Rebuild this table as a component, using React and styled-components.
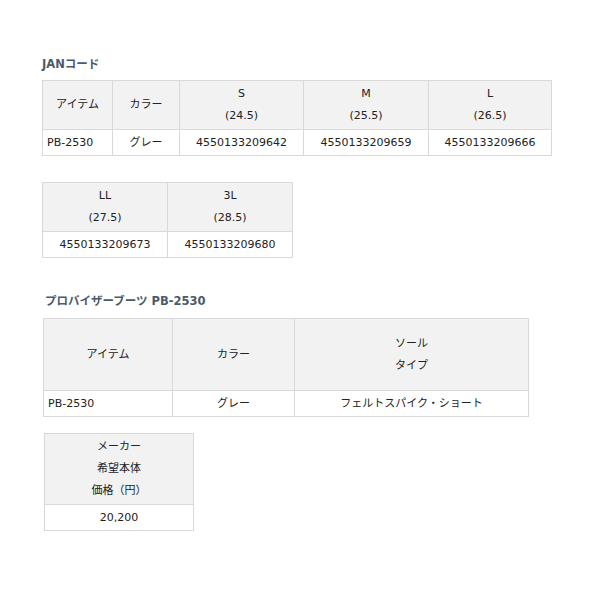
import styled, { createGlobalStyle } from "styled-components";

const GlobalStyle = createGlobalStyle`
  html, body {
    margin: 0;
    padding: 0;
    background: #ffffff;
  }
  body {
    font-family: "DejaVu Sans", "Noto Sans CJK JP", sans-serif;
    font-size: 11px;
    color: #222222;
  }
`;

const Page = styled.div`
  display: flex;
  flex-direction: column;
  align-items: flex-start;
  padding: 56px 0 40px 42px;
`;

const Heading = styled.h3`
  margin: ${(p) => p.$top || 0}px 0 0 ${(p) => p.$left || 0}px;
  font-size: 11.5px;
  line-height: 16px;
  font-weight: bold;
  color: #4b5a6c;
`;

const Table = styled.table`
  border-collapse: separate;
  border-spacing: 0;
  table-layout: fixed;
  margin: ${(p) => p.$top || 0}px 0 0 ${(p) => p.$left || 0}px;
  border-top: 1px solid #d9d9d9;
  border-left: 1px solid #d9d9d9;
  font-size: 11px;
`;

const Cell = styled.td`
  box-sizing: border-box;
  width: ${(p) => p.$w}px;
  height: ${(p) => p.$h || 26}px;
  padding: 0 4px;
  border-right: 1px solid #d9d9d9;
  border-bottom: 1px solid #d9d9d9;
  text-align: ${(p) => (p.$left ? "left" : "center")};
  vertical-align: middle;
  line-height: 22px;
  font-size: 11px;
  background: #ffffff;
`;

const HeadCell = styled(Cell)`
  background: #f2f2f2;
  font-weight: normal;
`;

const jan = [
  { size: "S", cm: "(24.5)", code: "4550133209642", w: 124 },
  { size: "M", cm: "(25.5)", code: "4550133209659", w: 125 },
  { size: "L", cm: "(26.5)", code: "4550133209666", w: 123 },
];

const jan2 = [
  { size: "LL", cm: "(27.5)", code: "4550133209673", w: 125 },
  { size: "3L", cm: "(28.5)", code: "4550133209680", w: 125 },
];

export default function App() {
  return (
    <>
      <GlobalStyle />
      <Page>
        <Heading>JANコード</Heading>
        <Table $top={8}>
          <tbody>
            <tr>
              <HeadCell as="th" $w={70} $h={49}>アイテム</HeadCell>
              <HeadCell as="th" $w={67} $h={49}>カラー</HeadCell>
              {jan.map((j) => (
                <HeadCell as="th" key={j.size} $w={j.w} $h={49}>
                  {j.size}
                  <br />
                  {j.cm}
                </HeadCell>
              ))}
            </tr>
            <tr>
              <Cell $w={70} $left>PB-2530</Cell>
              <Cell $w={67}>グレー</Cell>
              {jan.map((j) => (
                <Cell key={j.size} $w={j.w}>{j.code}</Cell>
              ))}
            </tr>
          </tbody>
        </Table>

        <Table $top={26}>
          <tbody>
            <tr>
              {jan2.map((j) => (
                <HeadCell as="th" key={j.size} $w={j.w} $h={49}>
                  {j.size}
                  <br />
                  {j.cm}
                </HeadCell>
              ))}
            </tr>
            <tr>
              {jan2.map((j) => (
                <Cell key={j.size} $w={j.w}>{j.code}</Cell>
              ))}
            </tr>
          </tbody>
        </Table>

        <Heading $top={35} $left={3}>プロバイザーブーツ PB-2530</Heading>
        <Table $top={9} $left={1}>
          <tbody>
            <tr>
              <HeadCell as="th" $w={129} $h={72}>アイテム</HeadCell>
              <HeadCell as="th" $w={122} $h={72}>カラー</HeadCell>
              <HeadCell as="th" $w={234} $h={72}>
                ソール
                <br />
                タイプ
              </HeadCell>
            </tr>
            <tr>
              <Cell $w={129} $left>PB-2530</Cell>
              <Cell $w={122}>グレー</Cell>
              <Cell $w={234}>フェルトスパイク・ショート</Cell>
            </tr>
          </tbody>
        </Table>

        <Table $top={16} $left={2}>
          <tbody>
            <tr>
              <HeadCell as="th" $w={149} $h={71}>
                メーカー
                <br />
                希望本体
                <br />
                価格（円）
              </HeadCell>
            </tr>
            <tr>
              <Cell $w={149}>20,200</Cell>
            </tr>
          </tbody>
        </Table>
      </Page>
    </>
  );
}
